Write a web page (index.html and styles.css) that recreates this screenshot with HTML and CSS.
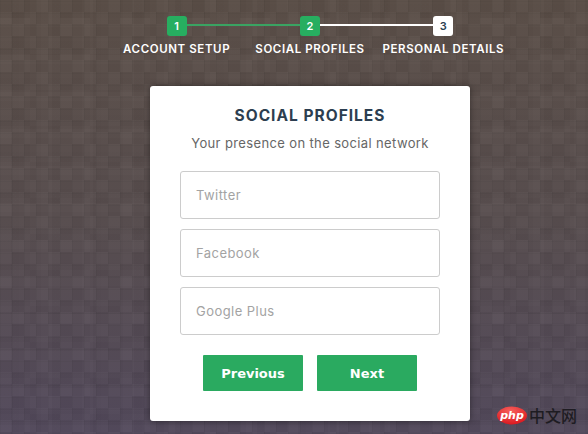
FILE: index.html
```html
<!DOCTYPE html>
<html lang="en">
<head>
<meta charset="utf-8">
<title>Social Profiles</title>
<link rel="stylesheet" href="styles.css">
</head>
<body>
<main class="wizard">
  <ol class="steps">
    <li class="step done"><span class="num">1</span><span class="label">ACCOUNT SETUP</span></li>
    <li class="step current"><span class="num">2</span><span class="label">SOCIAL PROFILES</span></li>
    <li class="step"><span class="num">3</span><span class="label">PERSONAL DETAILS</span></li>
  </ol>
  <form class="card">
    <h2 class="title">SOCIAL PROFILES</h2>
    <p class="subtitle">Your presence on the social network</p>
    <input class="field" type="text" placeholder="Twitter">
    <input class="field" type="text" placeholder="Facebook">
    <input class="field" type="text" placeholder="Google Plus">
    <div class="actions">
      <button class="btn" type="button">Previous</button>
      <button class="btn" type="button">Next</button>
    </div>
  </form>
</main>
<div class="watermark">
  <svg class="php-badge" width="30" height="19" viewBox="0 0 30 19" aria-hidden="true">
    <defs>
      <radialGradient id="phpred" cx="45%" cy="25%" r="80%">
        <stop offset="0" stop-color="#f8605c"/>
        <stop offset="1" stop-color="#d8141c"/>
      </radialGradient>
    </defs>
    <ellipse cx="15" cy="9.5" rx="15" ry="9" fill="url(#phpred)"/>
    <text class="php-text" x="15" y="13" text-anchor="middle">php</text>
  </svg>
  <span class="cn">中文网</span>
</div>
</body>
</html>
```
FILE: styles.css
```css
* { box-sizing: border-box; }

html, body { height: 100%; }

body {
  margin: 0;
  height: 434px;
  overflow: hidden;
  position: relative;
  font-family: Inter, "Open Sans", "Liberation Sans", sans-serif;
  background-color: #58504f;
  background-image:
    conic-gradient(rgba(255,255,255,.022) 25%, transparent 0 50%, rgba(255,255,255,.022) 0 75%, transparent 0),
    conic-gradient(transparent 25%, rgba(0,0,0,.025) 0 50%, transparent 0 75%, rgba(0,0,0,.025) 0),
    repeating-linear-gradient(90deg, rgba(255,255,255,.012) 0 11px, rgba(0,0,0,.012) 11px 19px, rgba(255,255,255,0) 19px 41px),
    repeating-linear-gradient(0deg, rgba(255,255,255,.012) 0 9px, rgba(0,0,0,.012) 9px 23px, rgba(255,255,255,0) 23px 37px),
    repeating-linear-gradient(90deg, rgba(0,0,0,.03) 0 1px, transparent 1px 12px),
    repeating-linear-gradient(0deg, rgba(0,0,0,.03) 0 1px, transparent 1px 12px),
    linear-gradient(180deg, #5a4e47 0%, #574d4e 50%, #51485a 100%);
  background-size: 24px 24px, 60px 36px, auto, auto, auto, auto, auto;
}

.wizard {
  width: 400px;
  margin-left: 110px;
  padding-top: 16px;
}

.steps {
  list-style: none;
  margin: 0;
  padding: 0;
  display: grid;
  grid-template-columns: repeat(3, 1fr);
}

.step {
  position: relative;
  display: flex;
  flex-direction: column;
  align-items: center;
  gap: 5px;
}

.step:not(:first-child)::before {
  content: "";
  position: absolute;
  top: 8px;
  right: 50%;
  width: 100%;
  height: 2px;
  background: #fff;
}

.step.current::before { background: #3aa362; }

.num {
  position: relative;
  z-index: 1;
  width: 20px;
  height: 20px;
  border-radius: 3px;
  background: #fff;
  color: #2c3e50;
  font-size: 11px;
  font-weight: 600;
  line-height: 20px;
  text-align: center;
}

.done .num, .current .num {
  background: #27ae60;
  color: #fff;
}

.label {
  color: #fff;
  font-size: 11.5px;
  font-weight: 600;
  letter-spacing: .6px;
  line-height: 16px;
  white-space: nowrap;
}

.card {
  width: 320px;
  height: 335px;
  margin: 29px auto 0;
  padding: 21px 30px 0;
  background: #fff;
  border-radius: 3px;
  box-shadow: 0 0 6px rgba(0,0,0,.4);
  display: flex;
  flex-direction: column;
}

.title {
  margin: 0;
  color: #2c3e50;
  font-size: 15.5px;
  font-weight: 700;
  letter-spacing: 1px;
  line-height: 18px;
  text-align: center;
}

.subtitle {
  margin: 9px 0 19px;
  color: #666;
  font-size: 13px;
  letter-spacing: .37px;
  line-height: 18px;
  text-align: center;
}

.field {
  display: block;
  width: 260px;
  height: 48px;
  margin-bottom: 10px;
  padding: 0 15px;
  border: 1px solid #ccc;
  border-radius: 3px;
  background: #fff;
  color: #2c3e50;
  font-family: inherit;
  font-size: 13px;
  letter-spacing: .45px;
}

.field::placeholder { color: #a3a3a3; opacity: 1; }

.actions {
  display: flex;
  justify-content: center;
  gap: 14px;
  margin-top: 10px;
}

.btn {
  width: 100px;
  height: 36px;
  padding: 0;
  border: 0;
  border-radius: 1px;
  background: #2aaa60;
  color: #fff;
  font-family: "DejaVu Sans", Verdana, sans-serif;
  font-size: 13px;
  font-weight: 700;
}

.watermark {
  position: absolute;
  left: 497px;
  top: 405px;
  display: flex;
  align-items: center;
  gap: 2px;
}

.php-badge { display: block; }

.php-text {
  fill: #fff;
  font-family: "DejaVu Sans", sans-serif;
  font-size: 11px;
  font-style: italic;
  font-weight: 700;
}

.cn {
  color: #1e1c22;
  font-family: "Noto Sans CJK SC", sans-serif;
  font-size: 16px;
  font-weight: 500;
  line-height: 20px;
}
```
